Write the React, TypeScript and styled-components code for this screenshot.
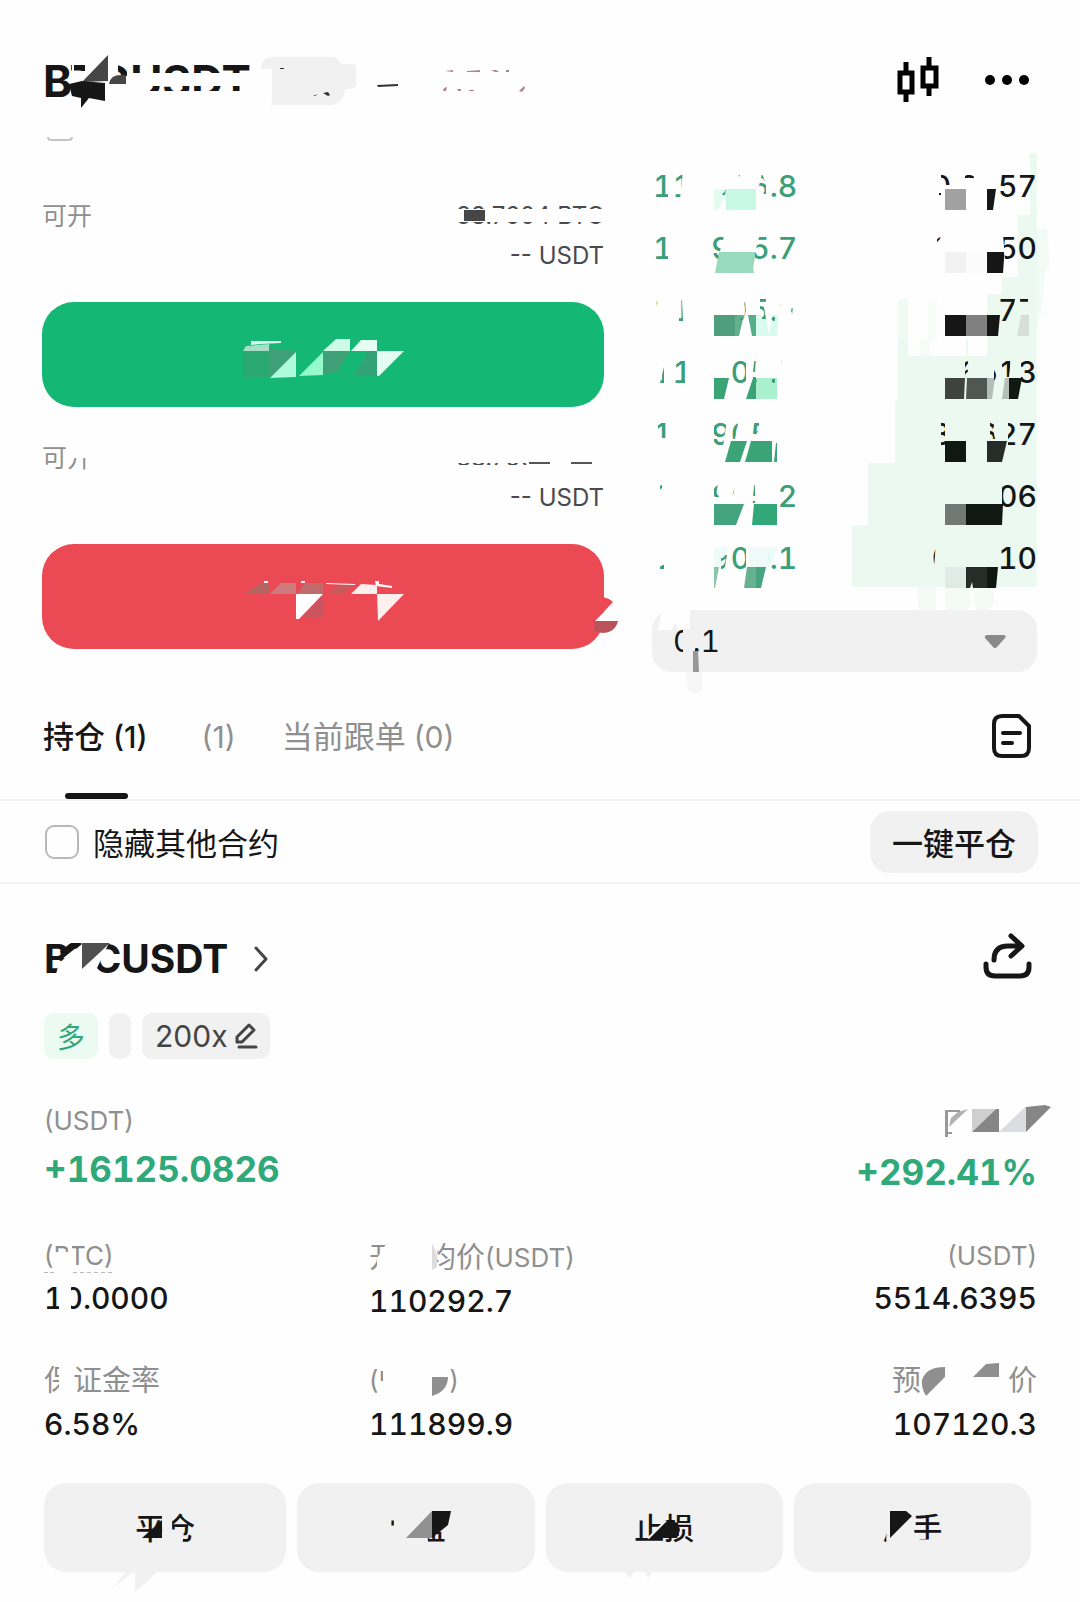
import React from "react";
import styled, { createGlobalStyle } from "styled-components";

const ink = "#161616";
const muted = "#8f8f8f";
const gain = "#2fa87a";
const surface = "#f1f1f1";

const GlobalStyle = createGlobalStyle`
  * { box-sizing: border-box; }
  body { margin: 0; background: #fefefe; }
  body, button, select, input {
    font-family: Inter, "Noto Sans CJK SC", sans-serif;
    color: ${ink};
  }
  button { border: 0; padding: 0; background: none; cursor: pointer; }
`;

type Mark = [string, string];

const Page = styled.main`
  padding-bottom: 28px;
`;

const Holder = styled.span`
  position: relative;
  display: inline-block;
  white-space: nowrap;
`;

const Kept = styled.span<{ $keep?: string }>`
  display: block;
  clip-path: ${(p) => (p.$keep ? `path("${p.$keep}")` : "none")};
`;

const Overlay = styled.svg`
  position: absolute;
  inset: 0;
  width: 100%;
  height: 100%;
  overflow: visible;
  pointer-events: none;
`;

const Drawing = styled.svg`
  display: block;
  flex: none;
  overflow: visible;
`;

const box = (x: number, y: number, w: number, h: number) => `M${x} ${y}h${w}v${h}h${-w}z`;

function Shapes({ marks }: { marks: Mark[] }) {
  return (
    <>
      {marks.map(([fill, d], i) => (
        <path key={i} fill={fill} d={d} />
      ))}
    </>
  );
}

function Worn({ text, keep, marks = [] }: { text: string; keep?: string; marks?: Mark[] }) {
  return (
    <Holder>
      <Kept $keep={keep}>{text}</Kept>
      <Overlay aria-hidden="true">
        <Shapes marks={marks} />
      </Overlay>
    </Holder>
  );
}

/* ---------- header ---------- */

const Header = styled.header`
  display: flex;
  align-items: center;
  padding: 49px 49px 24px 43px;
`;

const Pair = styled.h1`
  margin: 0;
  font-size: 44px;
  line-height: 64px;
  font-weight: 700;
`;

const TagArea = styled.div`
  flex: 1;
  padding-left: 10px;
`;

const HeaderTools = styled.div`
  display: flex;
  align-items: center;
  gap: 46px;
  padding-bottom: 3px;
`;

/* ---------- trading area ---------- */

const Trading = styled.section`
  display: grid;
  grid-template-columns: 562fr 385fr;
  column-gap: 48px;
  padding: 0 43px 0 42px;
`;

const OrderForm = styled.div`
  display: flex;
  flex-direction: column;
`;

const FieldEdge = styled.div`
  width: 26px;
  height: 4px;
  margin: 0 0 55px 5px;
  border: solid #c4c4c4;
  border-width: 0 2px 2px;
  border-radius: 0 0 8px 8px;
`;

const Limits = styled.div`
  display: flex;
  justify-content: space-between;
  margin-bottom: 26px;
  font-size: 24px;
  line-height: 40px;
  color: #4a4a4c;
`;

const LimitLabel = styled.span`
  font-size: 25px;
  color: ${muted};
`;

const LimitValues = styled.div`
  display: flex;
  flex-direction: column;
  align-items: flex-end;
`;

const TradeButton = styled.button<{ $tone: string }>`
  position: relative;
  display: flex;
  align-items: center;
  justify-content: center;
  height: 105px;
  margin-bottom: 31px;
  border-radius: 32px;
  background: ${(p) => p.$tone};
  &:last-child { margin-bottom: 0; }
`;

const EdgeSplash = styled.svg`
  position: absolute;
  right: -14px;
  top: 53px;
  overflow: visible;
`;

const Book = styled.div`
  padding-top: 16px;
`;

const Rows = styled.ol`
  list-style: none;
  margin: 0 0 23px;
  padding: 0;
`;

const BookRow = styled.li<{ $depth: number }>`
  position: relative;
  height: 62px;
  background: linear-gradient(#ebf9f1, #ebf9f1) right / ${(p) => p.$depth}px 100% no-repeat;
`;

const RowValues = styled.div<{ $keep: string }>`
  position: relative;
  z-index: 1;
  display: flex;
  justify-content: space-between;
  padding-left: 1px;
  font-size: 30px;
  line-height: 66px;
  font-weight: 500;
  font-variant-numeric: tabular-nums;
  clip-path: path("${(p) => p.$keep}");
`;

const Price = styled.span`
  color: #3a9f78;
`;

const StepBox = styled.label`
  position: relative;
  display: block;
`;

const StepSelect = styled.select`
  display: block;
  width: 100%;
  height: 62px;
  padding: 0 21px;
  border: 0;
  border-radius: 20px;
  appearance: none;
  background: ${surface};
  font-size: 30px;
  font-variant-numeric: tabular-nums;
`;

interface BookLine {
  price: string;
  amount: string;
  depth: number;
  keep: string;
  under?: Mark[];
  marks: Mark[];
}

const lines: BookLine[] = [
  {
    price: "110906.8", amount: "0.2757", depth: 7,
    keep: "M0 18h16v28h-16zM20 18h11l-3 28h-8zM50 30l2 2-2 6h-1zM70 42l4-6-1 6h-3zM86 20h3l-2 4zM110 20l4 12v9h-2l-5-8zM116 18h30v28h-30zM289 18h6l3 8v6h-4l-5-8zM313 18h9v7h-9zM348 18h37v28h-37z",
    marks: [["#e4fbf1", "M62 36h12v6l-8 15h-4z"], ["#c8f9e5", box(74, 36, 30, 21)], ["#a1a1a1", box(293, 36, 21, 21)], [ink, "M335 36h9l-3 21h-6z"], [ink, box(287, 40, 2, 2)]],
  },
  {
    price: "110905.7", amount: "1.0050", depth: 19,
    keep: "M0 18h16v28h-16zM58 18h15l-4 14-3 12h-8zM108 18h38v28h-43v-8zM285 20h4l-1 4-3 3zM351 18h34v28h-32z",
    under: [["#f3fbf6", "M385 14h10l3 34-7 14h-6z"]],
    marks: [["#97dabc", "M67 37h37l-3 16 1 5h-39z"], ["#f2f2f2", box(293, 37, 21, 21)], ["#fbfbfb", box(314, 37, 21, 21)], [ink, "M335 37h17v7l-1 14h-16z"]],
  },
  {
    price: "110905.6", amount: "3.0577", depth: 35,
    keep: "M3 24h3l-2 6h-1zM30 22l1 22h-4v-12zM93 24l1 10-3 9h-3zM108 20h6v6l-2 4 2 12h-4l-2-10zM116 38h7v8h-7zM128 22h2l-2 8zM140 30h1l-1 8h-2zM348 18h16l-6 28h-10zM368 18h8v7h-8z",
    under: [["#ebf9f1", box(335, 17, 15, 45)], ["#f3fbf6", "M385 0h8l-4 38-4 10z"], ["#effbf4", box(246, 22, 10, 40)], ["#f6fcf8", box(276, 24, 9, 38)]],
    marks: [["#4f9f7c", box(62, 38, 21, 21)], ["#63b08f", "M83 38h9l-5 21h-4z"], ["#56ad8a", "M96 38h8v21h-4z"], ["#d9fbef", "M104 38h10l3 21h-13z"], ["#d9fbef", "M120 38h6l-1 21h-8z"], [ink, box(293, 38, 21, 21)], ["#808080", box(314, 38, 21, 21)], [ink, "M335 38h13l-2 21h-11z"], ["#d8dfdb", "M369 38h8v21h-12z"]],
  },
  {
    price: "110905.5", amount: "2.6513", depth: 139,
    keep: "M12 28v16h-4zM20 18h13v28h-13zM78 18h16v28h-16zM99 18h5l-1 16 2 10h-4zM118 38h5v6h-5zM128 22h2l-2 6zM313 18h4l-2 10 2 10h-4zM342 30h4v8l-4 4zM350 18h9l-2 20h-7zM369 18h16v28h-16z",
    under: [["#fefefe", "M256 0h12v17h-12zM278 0h36v17h-36zM316 0h19v17h-19z"], ["#f5fcf8", box(268, 0, 10, 17)]],
    marks: [["#3aa476", "M62 39h15l-5 21h-10z"], ["#3aa476", "M101 39h3v21h-10z"], ["#aaefce", box(104, 39, 21, 21)], ["#3f433f", "M293 39h20l-1 21h-19z"], ["#505652", "M315 39h20v21h-21z"], ["#b4bfb9", "M335 39h8l-3 21h-5z"], ["#b4bfb9", "M353 39h4v21h-7z"], ["#101812", "M357 39h13l-4 21h-9z"]],
  },
  {
    price: "110905.4", amount: "8.3627", depth: 142,
    keep: "M6 18h8v19h-8zM62 18h13l-4 28h-9zM78 18h9l-4 20h-5zM99 18h8v10l-3 6h-5zM289 18h4v28h-4zM338 18h6l-3 10 2 10h-5zM356 18h9v28h-9zM366 18h19v28h-19z",
    marks: [["#3aa476", "M79 40h16l-7 21h-15z"], ["#3aa476", "M99 40h21v21h-27z"], ["#3aa476", "M124 42h1v19h-3z"], ["#101812", box(293, 40, 21, 21)], ["#262c28", "M335 40h20l-5 21h-15z"]],
  },
  {
    price: "110905.2", amount: "4.1506", depth: 169,
    keep: "M8 22h2v5h-2zM62 18h5l-2 8 2 8h-5zM83 24l-2 8h-1zM99 18h4v22h-4zM126 18h20v28h-20zM350 18h35v28h-35z",
    marks: [["#44a47e", "M62 41h30l-8 21h-22z"], ["#32a878", "M102 41h23v21h-25z"], ["#707974", box(293, 41, 21, 21)], ["#101812", "M314 41h37l-1 21h-36z"]],
  },
  {
    price: "110900.1", amount: "0.9310", depth: 185,
    keep: "M8 40h4v4h-4zM69 30h6l-2 12-4 4zM78 18h16v28h-16zM116 18h28v28h-28zM279 18h5l-2 24h-3zM349 18h36v28h-36z",
    under: [["#eefbf8", "M62 22h14l-8 20h-6zM96 22h30l-8 20h-20z"]],
    marks: [["#8cc4a9", "M62 42h5l-4 21h-1z"], ["#66b18f", "M95 42h9v21h-12z"], ["#48a47e", "M104 42h10l-5 21h-5z"], ["#e1ebe5", box(293, 42, 21, 21)], ["#262c28", "M314 42h21v21h-14l-1-6-2 6h-4z"], ["#101812", "M335 42h11l-2 21h-9z"], ["#f4fbf7", "M265 62h19v34q-9 14-17 0zM293 63h25v19l-6 8h-18zM320 63h22v14q-8 16-18 6z"]],
  },
];

/* ---------- tabs and filter ---------- */

const Tabs = styled.nav`
  display: flex;
  align-items: center;
  padding: 0 48px 0 43px;
  border-bottom: 2px solid #f3f3f3;
`;

const Tab = styled.button<{ $active?: boolean }>`
  position: relative;
  margin-right: 46px;
  padding: 43px 0 40px;
  font-size: 31px;
  line-height: 44px;
  font-weight: ${(p) => (p.$active ? 500 : 400)};
  color: ${(p) => (p.$active ? ink : muted)};
  white-space: nowrap;
  &::after {
    content: "";
    display: ${(p) => (p.$active ? "block" : "none")};
    position: absolute;
    left: 22px;
    bottom: 0;
    width: 63px;
    height: 6px;
    border-radius: 3px;
    background: ${ink};
  }
`;

const TabCount = styled.span`
  margin-left: 8px;
  font-size: 30px;
`;

const IconButton = styled.button`
  display: block;
  margin-left: auto;
`;

const Filter = styled.div`
  display: flex;
  align-items: center;
  justify-content: space-between;
  height: 83px;
  padding: 0 42px 0 45px;
  border-bottom: 2px solid #f3f3f3;
`;

const HideOthers = styled.label`
  display: flex;
  align-items: center;
  gap: 14px;
  font-size: 31px;
`;

const Check = styled.input`
  width: 34px;
  height: 34px;
  margin: 0;
  appearance: none;
  border: 2px solid #b8b8b8;
  border-radius: 9px;
`;

const CloseAll = styled.button`
  height: 62px;
  padding: 0 22px;
  border-radius: 20px;
  background: ${surface};
  font-size: 31px;
  font-weight: 500;
`;

/* ---------- position ---------- */

const Position = styled.section`
  padding: 50px 43px 0 44px;
`;

const PositionHead = styled.div`
  display: flex;
  align-items: center;
  height: 50px;
  margin-bottom: 29px;
  padding-right: 2px;
`;

const PositionPair = styled.h2`
  margin: 0 26px 0 0;
  font-size: 39px;
  line-height: 50px;
  font-weight: 700;
`;

const Chips = styled.div`
  display: flex;
  gap: 11px;
  margin-bottom: 44px;
`;

const Chip = styled.span<{ $tone?: "long"; $blank?: boolean }>`
  display: flex;
  align-items: center;
  gap: 7px;
  height: 46px;
  padding: 0 ${(p) => (p.$blank ? 11 : 13)}px;
  border-radius: 10px;
  background: ${(p) => (p.$tone === "long" ? "#ebfbf2" : surface)};
  color: ${(p) => (p.$tone === "long" ? gain : "#444")};
  font-size: ${(p) => (p.$tone === "long" ? 28 : 30)}px;
`;

const Stats = styled.dl`
  display: grid;
  grid-template-columns: 325fr 334fr 334fr;
  row-gap: 40px;
  margin: 0 0 39px;
`;

const Stat = styled.div<{ $end?: boolean; $wide?: boolean }>`
  grid-column: ${(p) => (p.$wide ? "span 2" : "auto")};
  text-align: ${(p) => (p.$end ? "right" : "left")};
`;

const StatName = styled.dt<{ $tall?: boolean }>`
  display: flex;
  height: ${(p) => (p.$tall ? 39 : 36)}px;
  margin-bottom: 4px;
  font-size: 29px;
  line-height: ${(p) => (p.$tall ? 39 : 36)}px;
  color: ${muted};
  ${Stat}[data-end] & { justify-content: flex-end; }
`;

const Unit = styled.span`
  font-size: 26px;
`;

const StatValue = styled.dd<{ $big?: boolean }>`
  margin: 0;
  font-size: ${(p) => (p.$big ? 35 : 30)}px;
  line-height: ${(p) => (p.$big ? 52 : 40)}px;
  font-weight: ${(p) => (p.$big ? 700 : 500)};
  color: ${(p) => (p.$big ? gain : ink)};
  font-variant-numeric: tabular-nums;
`;

const Actions = styled.div`
  display: grid;
  grid-template-columns: 242fr 237fr 237fr 237fr;
  gap: 11px;
  padding-right: 6px;
`;

const Action = styled.button`
  height: 89px;
  border-radius: 22px;
  background: ${surface};
  font-size: 30px;
  line-height: 40px;
  font-weight: 500;
`;

export default function App() {
  return (
    <Page>
      <GlobalStyle />
      <Header>
        <Pair>
          <Worn
            text="BTCUSDT"
            keep={box(0, 8, 29, 44) + box(31, 12, 11, 10) + box(75, 16, 9, 11) + box(88, 12, 130, 12) + box(107, 37, 94, 5)}
            marks={[
              ["#464646", "M65 6v26l-26 1z"],
              [ink, "M26 35l13-3 23 2v18l-16-3-8 10v-10l-9-2z"],
              ["#464646", "M66 35q1-9 12-9h5v9z"],
            ]}
          />
        </Pair>
        <TagArea>
          <Drawing width="280" height="48" viewBox="0 0 280 48" aria-hidden="true">
            <path fill={surface} d="M0 12Q0 0 12 0h58q8 0 10 7h12q3 0 3 5v15q0 5-7 5h-4q-2 16-14 16H8q3 0 3-6V12z" />
            <path fill="#333" d="M62 36l5-1 2 3-2 1zM52 39l5-2-3 2zM19 11h4v1h-4zM116 28l21-1v2l-20 1z" />
            <path fill="#b5848a" d="M184 14l8-1v2zM206 14l13-1v2h-13zM230 13h5l3 2h-4zM245 13h3v2h-3zM182 34l1-3 3-1-1 4zM196 32h4v2h-3zM208 33h5v1h-5zM258 34l5-5 1 2-3 4z" />
          </Drawing>
        </TagArea>
        <HeaderTools>
          <button aria-label="K线">
            <Drawing width="42" height="46" viewBox="0 0 42 46">
              <path fill="none" stroke="#000" strokeWidth="5" d="M3 16h12v19H3zM26 11h13v18H26zM9 5v11M9 35v10M32 0v11M32 29v10" />
            </Drawing>
          </button>
          <button aria-label="更多">
            <Drawing width="46" height="12" viewBox="0 0 46 12">
              <circle cx="5" cy="6" r="5" />
              <circle cx="22" cy="6" r="5" />
              <circle cx="39" cy="6" r="5" />
            </Drawing>
          </button>
        </HeaderTools>
      </Header>

      <Trading>
        <OrderForm>
          <FieldEdge />
          <Limits>
            <LimitLabel>可开</LimitLabel>
            <LimitValues>
              <Worn text="38.7604 BTC" keep={box(0, 10, 160, 3) + box(0, 26, 160, 4)} marks={[["#464646", box(8, 14, 21, 11)]]} />
              <span>-- USDT</span>
            </LimitValues>
          </Limits>
          <TradeButton $tone="#14b874" aria-label="开多">
            <Drawing width="160" height="34" viewBox="0 0 160 34">
              <Shapes
                marks={[
                  ["#2aa973", box(0, 13, 26, 26)],
                  ["#3fa077", "M26 10l27 3v26H26z"],
                  ["#d8fbec", "M8 3h30v2L17 6l-9 1z"],
                  ["#a5dfc4", "M3 8l23-2v7H0z"],
                  ["#adfbdc", "M53 14v25l-26 1z"],
                  ["#96fbca", "M80 14v23l-24 1z"],
                  ["#ccfbe6", "M93 1h14v12H80z"],
                  ["#3fa077", "M80 13h27L94 34l-14 2z"],
                  ["#e6fdf3", "M118 2h16v11h-26z"],
                  ["#33a377", "M125 13h9v25h-23z"],
                  ["#e4fdf2", "M134 13h27l-25 25h-2z"],
                ]}
              />
            </Drawing>
          </TradeButton>
          <Limits>
            <LimitLabel>
              <Worn text="可开" keep={box(0, 0, 24, 40) + box(24, 20, 28, 20)} />
            </LimitLabel>
            <LimitValues>
              <Worn text="38.7604 BTC" keep={box(0, 25, 70, 2)} marks={[["#555", box(73, 24, 21, 2)], ["#555", box(115, 24, 21, 2)]]} />
              <span>-- USDT</span>
            </LimitValues>
          </Limits>
          <TradeButton $tone="#eb4a55" aria-label="开空">
            <Drawing width="160" height="34" viewBox="0 0 160 34">
              <Shapes
                marks={[
                  ["#b76461", "M1 14L17 3h10v11z"],
                  ["#cf7a7c", "M27 14L38 3h15v11z"],
                  ["#bf6b6b", "M54 14l8-11h18v11z"],
                  ["#c95a5e", "M84 14L95 5l15-1-9 10z"],
                  ["#fff", "M21 1h4v2h-4zM58 1h4v2h-4zM83 3l29 1v1l-29-1zM132 1h4v3l13 2v2l-16-2z"],
                  ["#fff0ee", "M108 14l10-10 16 1v9z"],
                  ["#c95560", "M59 38l21-22v22z"],
                  ["#fff", "M53 14h27L56 39h-3z"],
                  ["#fff0f0", "M134 14h27l-26 27z"],
                ]}
              />
            </Drawing>
            <EdgeSplash width="24" height="37" viewBox="0 0 24 37" aria-hidden="true">
              <path fill="#eb4a55" d="M8 0q7 1 11 5L1 24H0V0z" />
              <path fill="#fefefe" d="M11 14v10H1z" />
              <path fill="#bb525a" d="M1 24h23q-3 12-16 12L0 34z" />
            </EdgeSplash>
          </TradeButton>
        </OrderForm>

        <Book>
          <Rows>
            {lines.map((line) => (
              <BookRow key={line.price} $depth={line.depth}>
                <Overlay aria-hidden="true">
                  <Shapes marks={line.under ?? []} />
                </Overlay>
                <RowValues $keep={line.keep}>
                  <Price>{line.price}</Price>
                  <span>{line.amount}</span>
                </RowValues>
                <Overlay aria-hidden="true">
                  <Shapes marks={line.marks} />
                </Overlay>
              </BookRow>
            ))}
          </Rows>
          <StepBox>
            <StepSelect aria-label="深度精度" defaultValue="0.1">
              <option>0.1</option>
            </StepSelect>
            <Overlay aria-hidden="true" viewBox="0 0 385 62">
              <path fill={surface} d="M31 18h12v26H31z" />
              <path fill="#f6f6f6" d="M34 62h16v18q-8 6-14 0z" />
              <path fill="#fefefe" d="M10 0h28v19H26l-3-6-3 7H6z" />
              <path fill="#979797" d="M41 41h5l1 21h-6z" />
              <path fill="#8a8a8a" d="M336 25h15q4 0 2 3l-8 9q-2 2-4 0l-8-9q-1-3 3-3z" />
            </Overlay>
          </StepBox>
        </Book>
      </Trading>

      <Tabs>
        <Tab $active>
          持仓<TabCount>(1)</TabCount>
        </Tab>
        <Tab>
          <TabCount>(1)</TabCount>
        </Tab>
        <Tab>
          当前跟单<TabCount>(0)</TabCount>
        </Tab>
        <IconButton aria-label="订单记录">
          <Drawing width="42" height="46" viewBox="0 0 42 46">
            <path
              fill="none"
              stroke={ink}
              strokeWidth="4"
              strokeLinecap="round"
              strokeLinejoin="round"
              d="M12 3h17l10 10v22q0 8-8 8H12q-8 0-8-8V11q0-8 8-8zM13 20h17M13 30h9"
            />
          </Drawing>
        </IconButton>
      </Tabs>

      <Filter>
        <HideOthers>
          <Check type="checkbox" />
          隐藏其他合约
        </HideOthers>
        <CloseAll>一键平仓</CloseAll>
      </Filter>

      <Position>
        <PositionHead>
          <PositionPair>
            <Worn
              text="BTCUSDT"
              marks={[
                ["#fefefe", "M38 10v30H12l3-11z"],
                ["#fefefe", "M65 9L53 34v6H38V9z"],
                [ink, "M27 9h11L18 25l-2-8z"],
                ["#505050", "M38 9h28L38 35z"],
              ]}
            />
          </PositionPair>
          <Drawing width="14" height="26" viewBox="0 0 14 26" aria-hidden="true">
            <path fill="none" stroke="#444" strokeWidth="3" strokeLinecap="round" strokeLinejoin="round" d="M2 2l10 11L2 24" />
          </Drawing>
          <IconButton aria-label="分享">
            <Drawing width="54" height="50" viewBox="0 0 54 50">
              <path
                fill="none"
                stroke={ink}
                strokeWidth="5"
                strokeLinecap="round"
                strokeLinejoin="round"
                d="M5 30v3q0 9 9 9h25q9 0 9-9v-3M13 26Q13 12 27 12h12M30 2l11 10-11 10"
              />
            </Drawing>
          </IconButton>
        </PositionHead>

        <Chips>
          <Chip $tone="long">多</Chip>
          <Chip $blank />
          <Chip>
            200x
            <Drawing width="22" height="26" viewBox="0 0 22 26" aria-hidden="true">
              <path fill="none" stroke="#444" strokeWidth="3" strokeLinecap="round" strokeLinejoin="round" d="M14 2l5 5L7 19H2v-5zM4 24h17" />
            </Drawing>
          </Chip>
        </Chips>

        <Stats>
          <Stat $wide>
            <StatName><Unit>(USDT)</Unit></StatName>
            <StatValue $big>+16125.0826</StatValue>
          </Stat>
          <Stat $end data-end>
            <StatName $tall>
              <Drawing width="93" height="32" viewBox="0 -3 93 32" role="img" aria-label="收益率">
                <Shapes
                  marks={[
                    ["#999", "M1 4h15v2H4v20h4v2H4v3H1z"],
                    ["#b0b0b0", "M24 3L5 21l2-9 7-6z"],
                    ["#cfcfcf", "M28 3h24L28 26z"],
                    ["#868686", "M52 3h3v23H28z"],
                    ["#dcdde0", "M81 1h1v25H55z"],
                    ["#868686", "M82 1l19-2 6 2-25 25z"],
                  ]}
                />
              </Drawing>
            </StatName>
            <StatValue $big>+292.41%</StatValue>
          </Stat>

          <Stat>
            <StatName>
              <Unit>
                <Worn
                  text="(BTC)"
                  keep={box(0, 0, 9, 36) + box(10, 0, 14, 14) + box(28, 0, 60, 36)}
                  marks={[["#bbb", "M0 34h4v1H0zM6 34h4v1H6zM29 34h4v1h-4zM36 34h4v1h-4zM43 34h4v1h-4zM50 34h4v1h-4zM57 34h4v1h-4zM64 34h4v1h-4z"]]}
                />
              </Unit>
            </StatName>
            <StatValue>
              <Worn text="10.0000" keep={box(0, 0, 15, 40) + box(27, 0, 120, 40)} />
            </StatValue>
          </Stat>
          <Stat>
            <StatName $tall>
              <Worn text="开仓均价" keep={"M0 0h21L8 20v19H0z" + box(68, 0, 60, 39)} marks={[["#dcdcdc", "M63 5l5 12v12l-5 3z"]]} />
              <Unit>(USDT)</Unit>
            </StatName>
            <StatValue>110292.7</StatValue>
          </Stat>
          <Stat $end data-end>
            <StatName><Unit>(USDT)</Unit></StatName>
            <StatValue>5514.6395</StatValue>
          </Stat>

          <Stat>
            <StatName $tall>
              <Worn text="保证金率" keep={box(0, 0, 15, 39) + box(29, 0, 100, 39)} />
            </StatName>
            <StatValue>6.58%</StatValue>
          </Stat>
          <Stat>
            <StatName $tall>
              <Unit>
                <Worn text="(USDT)" keep={box(0, 0, 9, 39) + box(9, 0, 5, 20) + box(80, 0, 12, 39)} marks={[[muted, "M63 16h16q0 14-16 19z"]]} />
              </Unit>
            </StatName>
            <StatValue>111899.9</StatValue>
          </Stat>
          <Stat $end data-end>
            <StatName $tall>
              <Worn
                text="预估强平价"
                keep={box(0, 0, 28, 39) + box(116, 0, 32, 39)}
                marks={[[muted, "M30 19q4-13 23-13v10L34 35q-5-8-4-16z"], [muted, "M81 16L94 3l13-1v14z"]]}
              />
            </StatName>
            <StatValue>107120.3</StatValue>
          </Stat>
        </Stats>

        <Actions>
          <Action>
            <Worn
              text="平仓"
              keep={box(0, 0, 27, 40) + "M37 0h24v40h-14l2-18h-12z"}
              marks={[[ink, "M27 12v18H7z"], [surface, "M-22 80l16-20h6l-2 4zM0 84V60h27z"]]}
            />
          </Action>
          <Action>
            <Worn text="止盈" keep={box(4, 4, 4, 14) + box(42, 20, 20, 20)} marks={[["#919191", "M46 3v27H20z"], [ink, "M46 3h19l-3 14-16 13z"]]} />
          </Action>
          <Action>
            <Worn text="止损" marks={[[ink, "M15 30l18-18 11 3 2 7-3 8z"], [surface, "M13 30L31 12l2 1-18 18z"], [surface, "M-10 64h10l-4 6zM10 62l4 8 6-8z"]]} />
          </Action>
          <Action>
            <Worn text="反手" keep={box(0, 26, 4, 10) + box(32, 6, 30, 26)} marks={[[ink, "M8 3h16l6 5L8 30z"]]} />
          </Action>
        </Actions>
      </Position>
    </Page>
  );
}
